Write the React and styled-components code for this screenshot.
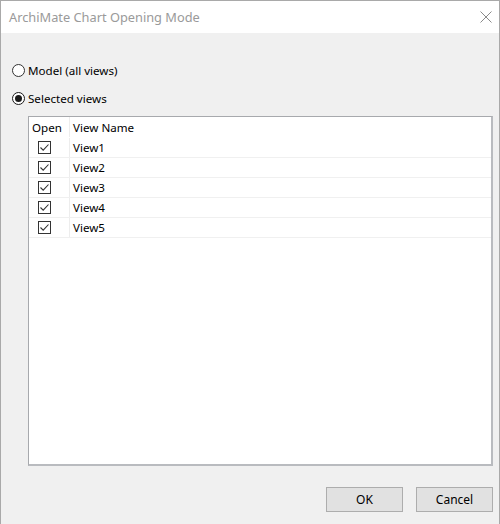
import React, { useState } from "react";
import styled, { createGlobalStyle } from "styled-components";

const GlobalStyle = createGlobalStyle`
  body {
    margin: 0;
    font-family: "Noto Sans", "Open Sans", sans-serif;
  }
`;

const Window = styled.div`
  width: 500px;
  height: 524px;
  box-sizing: border-box;
  border: 1px solid #a9a9a9;
  border-bottom: none;
  display: flex;
  flex-direction: column;
  background: #f0f0f0;
`;

const TitleBar = styled.div`
  height: 32px;
  background: #fff;
  display: flex;
  align-items: center;
  justify-content: space-between;
  padding: 0 7px 0 8px;
  flex-shrink: 0;
`;

const TitleText = styled.span`
  font-size: 12.8px;
  color: #9a9a9a;
`;

const CloseIcon = styled.svg`
  width: 12px;
  height: 12px;
`;

const Body = styled.div`
  flex: 1;
  display: flex;
  flex-direction: column;
  padding: 27px 6px 12px 11px;
`;

const RadioRow = styled.label`
  display: flex;
  align-items: center;
  height: 20px;
  gap: 3px;
  font-size: 11.6px;
  color: #000;
  cursor: pointer;
  & + & {
    margin-top: 8px;
  }
`;

const RadioCircle = styled.span`
  width: 13px;
  height: 13px;
  box-sizing: border-box;
  border-radius: 50%;
  border: 1px solid ${p => (p.$checked ? "#1a1a1a" : "#333")};
  background: #fff;
  display: flex;
  align-items: center;
  justify-content: center;
  &::after {
    content: "";
    width: 7px;
    height: 7px;
    border-radius: 50%;
    background: #1a1a1a;
    display: ${p => (p.$checked ? "block" : "none")};
  }
`;

const ListBox = styled.div`
  margin: 8px 0 0 16px;
  height: 350px;
  box-sizing: border-box;
  background: #fff;
  border: 1px solid #a7a9ad;
  border-right-width: 2px;
  border-bottom-width: 2px;
  border-right-color: #b9bbbf;
  border-bottom-color: #b9bbbf;
  font-size: 11.6px;
`;

const Row = styled.div`
  display: grid;
  grid-template-columns: 41px 1fr;
  height: ${p => (p.$header ? "20px" : "19px")};
  border-bottom: 1px solid ${p => (p.$header ? "#fff" : "#f0f0f0")};
`;

const Cell = styled.div`
  display: flex;
  align-items: center;
  padding-left: 3px;
  color: #000;
  border-right: ${p => (p.$first ? "1px solid #ededed" : "none")};
`;

const CheckBox = styled.span`
  width: 13px;
  height: 13px;
  box-sizing: border-box;
  border: 1px solid #333;
  background: #fff;
  display: flex;
  align-items: center;
  justify-content: center;
  margin-left: 6px;
  cursor: pointer;
`;

const Footer = styled.div`
  display: flex;
  justify-content: flex-end;
  gap: 13px;
  margin-top: 21px;
`;

const Button = styled.button`
  width: 77px;
  height: 25px;
  box-sizing: border-box;
  border: 1px solid #adadad;
  background: #e1e1e1;
  font-family: inherit;
  font-size: 12px;
  color: #000;
  padding: 0;
  cursor: pointer;
`;

const CheckMark = () => (
  <svg width="11" height="11" viewBox="0 0 11 11">
    <path d="M1.5 5.5 L4.2 8.2 L9.5 2.5" fill="none" stroke="#333" strokeWidth="1.1" />
  </svg>
);

const views = ["View1", "View2", "View3", "View4", "View5"];

export default function App() {
  const [mode, setMode] = useState("selected");
  const [open, setOpen] = useState(views.map(() => true));

  return (
    <>
      <GlobalStyle />
      <Window>
        <TitleBar>
          <TitleText>ArchiMate Chart Opening Mode</TitleText>
          <CloseIcon viewBox="0 0 12 12">
            <path d="M0.5 0.5 L11.5 11.5 M11.5 0.5 L0.5 11.5" stroke="#8a8a8a" strokeWidth="1" />
          </CloseIcon>
        </TitleBar>
        <Body>
          <RadioRow onClick={() => setMode("model")}>
            <RadioCircle $checked={mode === "model"} />
            Model (all views)
          </RadioRow>
          <RadioRow onClick={() => setMode("selected")}>
            <RadioCircle $checked={mode === "selected"} />
            Selected views
          </RadioRow>
          <ListBox>
            <Row $header>
              <Cell $first>Open</Cell>
              <Cell>View Name</Cell>
            </Row>
            {views.map((v, i) => (
              <Row key={v}>
                <Cell $first>
                  <CheckBox
                    onClick={() => setOpen(o => o.map((x, j) => (j === i ? !x : x)))}
                  >
                    {open[i] && <CheckMark />}
                  </CheckBox>
                </Cell>
                <Cell>{v}</Cell>
              </Row>
            ))}
          </ListBox>
          <Footer>
            <Button>OK</Button>
            <Button>Cancel</Button>
          </Footer>
        </Body>
      </Window>
    </>
  );
}
